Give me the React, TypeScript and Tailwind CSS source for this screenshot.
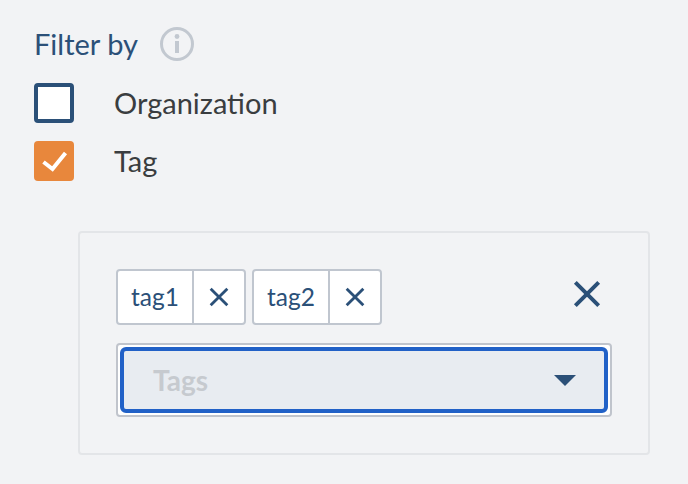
import { FC } from "react";

const CloseIcon: FC<{ className: string; strokeWidth: number }> = ({ className, strokeWidth }) => (
  <svg className={className} viewBox="0 0 24 24" fill="none" stroke="#2b5078" strokeWidth={strokeWidth} strokeLinecap="butt">
    <path d="M2 2 L22 22 M22 2 L2 22" />
  </svg>
);

const Check: FC<{ label: string; checked?: boolean }> = ({ label, checked }) => (
  <div className="flex h-10 items-center">
    {checked ? (
      <div className="flex h-10 w-10 items-center justify-center rounded-[4px] bg-[#e8873c]">
        <svg className="h-[24px] w-[28px]" viewBox="0 0 28 24" fill="none" stroke="#ffffff" strokeWidth="4">
          <path d="M3.5 13 L12.5 20 L25.5 4" />
        </svg>
      </div>
    ) : (
      <div className="h-10 w-10 rounded-[4px] border-4 border-[#2b5078] bg-white" />
    )}
    <span className="ml-10 text-[29px] leading-10 text-[#3a3d40]">{label}</span>
  </div>
);

const Tag: FC<{ label: string }> = ({ label }) => (
  <div className="flex h-[56px] w-[130px] rounded-[4px] border-2 border-[#c0c6cf] bg-white">
    <span className="flex w-[74px] items-center justify-center text-[24.5px] text-[#2b5078]">{label}</span>
    <span className="flex flex-1 items-center justify-center border-l-2 border-[#c0c6cf]">
      <CloseIcon className="h-[20px] w-[20px]" strokeWidth={3.4} />
    </span>
  </div>
);

export default function App() {
  return (
    <div className="h-[484px] w-[688px] overflow-hidden bg-[#f2f3f5] pl-[34px] pr-[38px] pt-[25px] font-['Lato',sans-serif]">
      <div className="flex h-[38px] items-center">
        <span className="text-[29px] leading-[38px] text-[#2b5078]">Filter by</span>
        <svg className="ml-[21px] h-9 w-9" viewBox="0 0 36 36" fill="none">
          <circle cx="18" cy="18" r="15.5" stroke="#c2c8d0" strokeWidth="3" />
          <circle cx="18" cy="10.5" r="2.4" fill="#c2c8d0" />
          <rect x="16" y="15" width="4" height="12" fill="#c2c8d0" />
        </svg>
      </div>
      <div className="mt-[20px] flex flex-col gap-[18px]">
        <Check label="Organization" />
        <Check label="Tag" checked />
      </div>
      <div className="ml-[44px] mt-[50px] h-[224px] rounded-[4px] border-2 border-[#e3e5e8] px-[36px] pt-[36px]">
        <div className="flex items-center">
          <div className="flex gap-[6px]">
            <Tag label="tag1" />
            <Tag label="tag2" />
          </div>
          <CloseIcon className="mb-[6px] ml-auto mr-[11px] h-[28px] w-[28px]" strokeWidth={3.4} />
        </div>
        <div className="mt-[18px] h-[74px] rounded-[4px] border-2 border-[#c0c4cc] bg-white p-[2px]">
          <div className="flex h-full items-center rounded-[6px] border-4 border-[#2161c7] bg-[#e8ecf1] pl-[29px] pr-[28px]">
            <span className="text-[28px] font-bold text-[#c6cacf]">Tags</span>
            <svg className="ml-auto h-[11px] w-[22px]" viewBox="0 0 22 11">
              <path d="M0 0 H22 L11 11 Z" fill="#2b5078" />
            </svg>
          </div>
        </div>
      </div>
    </div>
  );
}
